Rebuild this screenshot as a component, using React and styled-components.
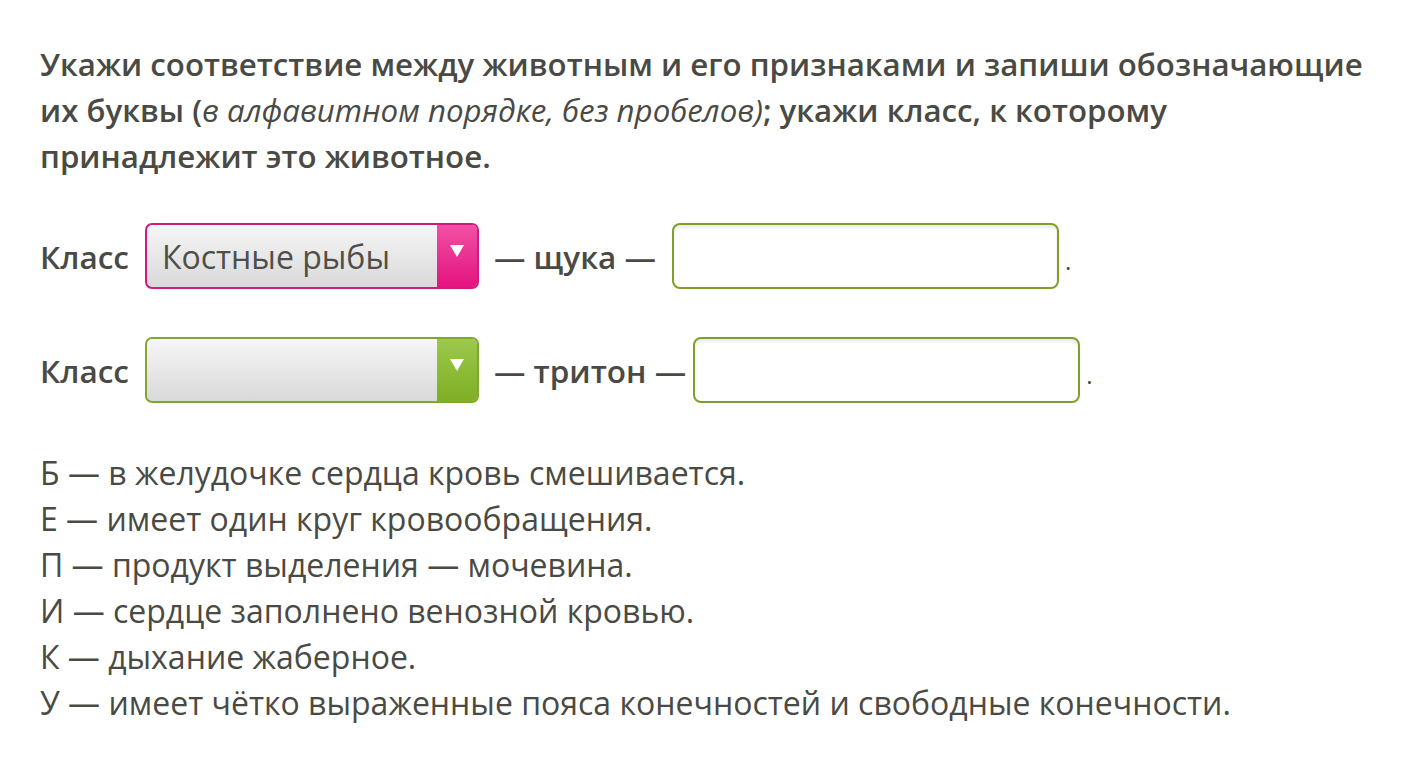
import styled, { createGlobalStyle } from 'styled-components'

const GlobalStyle = createGlobalStyle`
  body {
    margin: 0;
    background: #ffffff;
    font-family: "Open Sans", "Liberation Sans", sans-serif;
    color: #4a4a44;
  }
`

const Page = styled.div`
  padding: 41px 40px 0 40px;
  width: 1343px;
`

const Task = styled.p`
  margin: 0;
  font-size: 31.25px;
  line-height: 46px;
  font-weight: 600;
`

const Note = styled.span`
  font-style: italic;
  font-weight: 400;
`

const Rows = styled.div`
  display: flex;
  flex-direction: column;
  gap: 48px;
  margin-top: 44px;
`

const Row = styled.div`
  display: flex;
  align-items: center;
  height: 66px;
  font-size: 31.5px;
`

const Label = styled.span`
  font-weight: 600;
  margin-right: 16px;
`

const Dash = styled.span`
  font-weight: 600;
  margin-left: 15px;
  margin-right: ${p => p.$after}px;
`

const Select = styled.div`
  width: 334px;
  height: 66px;
  box-sizing: border-box;
  border: 2px solid ${p => (p.$pink ? '#d01a80' : '#80a82c')};
  border-radius: 7px;
  display: flex;
  overflow: hidden;
  background: linear-gradient(#f6f6f6, #d9d9d9);
`

const Value = styled.span`
  flex: 1;
  display: flex;
  align-items: center;
  padding-left: 15px;
  font-size: 32px;
  color: #4f4f4a;
`

const Arrow = styled.span`
  width: 40px;
  display: flex;
  align-items: center;
  justify-content: center;
  padding-bottom: 10px;
  box-sizing: border-box;
  background: ${p =>
    p.$pink
      ? 'linear-gradient(#f250a4, #e3137f)'
      : 'linear-gradient(#9cc84c, #7eaf24)'};
  &::after {
    content: '';
    border-left: 7px solid transparent;
    border-right: 7px solid transparent;
    border-top: 12px solid #ffffff;
  }
`

const Input = styled.div`
  width: 387px;
  height: 66px;
  box-sizing: border-box;
  border: 2px solid #7f9f2a;
  border-radius: 8px;
  background: #ffffff;
  box-shadow: inset 0 3px 3px rgba(0, 0, 0, 0.08);
`

const Dot = styled.span`
  margin-left: 6px;
  font-size: 24px;
  align-self: center;
  padding-top: 8px;
`

const List = styled.div`
  margin-top: 47px;
  font-size: 32px;
  line-height: 46px;
`

const Line = styled.div``

const items = [
  'Б — в желудочке сердца кровь смешивается.',
  'Е — имеет один круг кровообращения.',
  'П — продукт выделения — мочевина.',
  'И — сердце заполнено венозной кровью.',
  'К — дыхание жаберное.',
  'У — имеет чётко выраженные пояса конечностей и свободные конечности.',
]

const App = () => {
  return (
    <Page>
      <GlobalStyle />
      <Task>
        Укажи соответствие между животным и его признаками и запиши обозначающие
        их буквы (<Note>в алфавитном порядке, без пробелов)</Note>; укажи класс, к которому
        принадлежит это животное.
      </Task>
      <Rows>
        <Row>
          <Label>Класс</Label>
          <Select $pink>
            <Value>Костные рыбы</Value>
            <Arrow $pink />
          </Select>
          <Dash $after={16}>— щука —</Dash>
          <Input />
          <Dot>.</Dot>
        </Row>
        <Row>
          <Label>Класс</Label>
          <Select>
            <Value />
            <Arrow />
          </Select>
          <Dash $after={7}>— тритон —</Dash>
          <Input />
          <Dot>.</Dot>
        </Row>
      </Rows>
      <List>
        {items.map(t => (
          <Line key={t}>{t}</Line>
        ))}
      </List>
    </Page>
  )
}

export default App
